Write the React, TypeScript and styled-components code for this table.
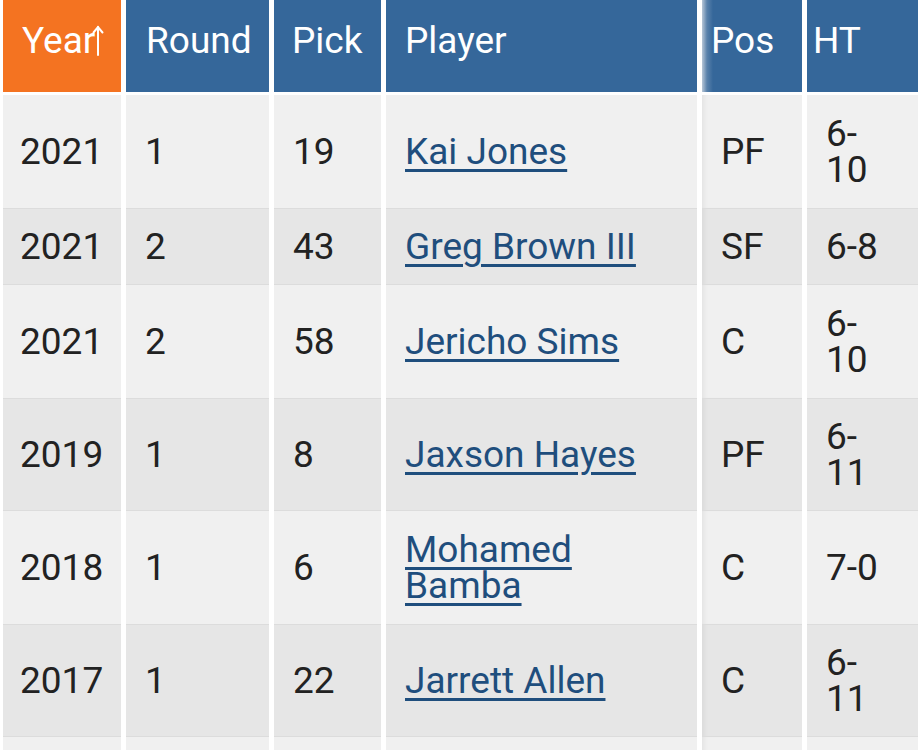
import React from "react";
import styled, { createGlobalStyle } from "styled-components";

const Global = createGlobalStyle`
  html, body { margin: 0; padding: 0; background: #ffffff; }
  body { font-family: Roboto, "Noto Sans", "Liberation Sans", sans-serif; overflow: hidden; }
`;

const COLS = "118px 143px 107px 311px 100px 1fr";

const Table = styled.div`
  width: 918px;
  box-sizing: border-box;
  padding-left: 3px;
  display: flex;
  flex-direction: column;
`;

const HeaderRow = styled.div`
  display: grid;
  grid-template-columns: ${COLS};
  column-gap: 5px;
  height: 92px;
  margin-bottom: 3px;
`;

const HeaderCell = styled.div<{ $active?: boolean; $pad: number; $fade?: boolean }>`
  display: flex;
  align-items: flex-start;
  padding: 22px 0 0 ${(p) => p.$pad}px;
  background: ${(p) =>
    p.$active
      ? "#f47321"
      : p.$fade
      ? "linear-gradient(to right, #b7c6d6 0px, #5a82ab 5px, #35679a 11px)"
      : "#35679a"};
  color: #ffffff;
  font-size: 37px;
  line-height: 37px;
`;

const SortArrow = styled.svg`
  width: 12px;
  height: 31px;
  margin-top: 3px;
  margin-left: -3px;
  flex: none;
`;

const BodyRow = styled.div`
  display: grid;
  grid-template-columns: ${COLS};
  column-gap: 5px;
`;

const Cell = styled.div<{ $shade: boolean; $pad: number; $right?: number; $fade?: boolean }>`
  display: flex;
  align-items: center;
  box-sizing: border-box;
  min-height: 77px;
  padding: 21px ${(p) => p.$right ?? 8}px 20px ${(p) => p.$pad}px;
  background: ${(p) => (p.$shade ? "#e6e6e6" : "#f0f0f0")};
  box-shadow: ${(p) =>
    [
      p.$shade ? "inset 0 1px 0 #dcdcdc, inset 0 -1px 0 #dcdcdc" : "",
      p.$fade ? "inset 5px 0 5px -3px rgba(0,0,0,0.06)" : "",
    ]
      .filter(Boolean)
      .join(", ") || "none"};
  color: #222222;
  font-size: 37px;
  line-height: 36px;
`;

const PlayerLink = styled.a`
  color: #1f4e7d;
  text-decoration: underline;
  text-decoration-thickness: 3px;
  text-underline-offset: 5px;
  cursor: pointer;
`;

type Pick = { year: string; round: string; pick: string; player: string; pos: string; ht: string };

const picks: Pick[] = [
  { year: "2021", round: "1", pick: "19", player: "Kai Jones", pos: "PF", ht: "6-10" },
  { year: "2021", round: "2", pick: "43", player: "Greg Brown III", pos: "SF", ht: "6-8" },
  { year: "2021", round: "2", pick: "58", player: "Jericho Sims", pos: "C", ht: "6-10" },
  { year: "2019", round: "1", pick: "8", player: "Jaxson Hayes", pos: "PF", ht: "6-11" },
  { year: "2018", round: "1", pick: "6", player: "Mohamed Bamba", pos: "C", ht: "7-0" },
  { year: "2017", round: "1", pick: "22", player: "Jarrett Allen", pos: "C", ht: "6-11" },
  { year: "", round: "", pick: "", player: "", pos: "", ht: "" },
];

export default function App() {
  return (
    <>
      <Global />
      <Table>
        <HeaderRow>
          <HeaderCell $active $pad={19}>
            Year
            <SortArrow viewBox="0 0 12 31" fill="none" stroke="#ffffff" strokeWidth={2} strokeLinecap="round">
              <path d="M6 30 V2" />
              <path d="M1.5 7.5 L6 2 L10.5 7.5" />
            </SortArrow>
          </HeaderCell>
          <HeaderCell $pad={20}>Round</HeaderCell>
          <HeaderCell $pad={18}>Pick</HeaderCell>
          <HeaderCell $pad={19}>Player</HeaderCell>
          <HeaderCell $pad={9} $fade>Pos</HeaderCell>
          <HeaderCell $pad={6}>HT</HeaderCell>
        </HeaderRow>
        {picks.map((p, i) => {
          const shade = i % 2 === 1;
          return (
            <BodyRow key={i}>
              <Cell $shade={shade} $pad={17}>{p.year}</Cell>
              <Cell $shade={shade} $pad={19}>{p.round}</Cell>
              <Cell $shade={shade} $pad={19}>{p.pick}</Cell>
              <Cell $shade={shade} $pad={19} $right={24}>
                {p.player && (
                  <span>
                    <PlayerLink>{p.player}</PlayerLink>
                  </span>
                )}
              </Cell>
              <Cell $shade={shade} $pad={19} $fade>{p.pos}</Cell>
              <Cell $shade={shade} $pad={19} $right={29}>{p.ht}</Cell>
            </BodyRow>
          );
        })}
      </Table>
    </>
  );
}
